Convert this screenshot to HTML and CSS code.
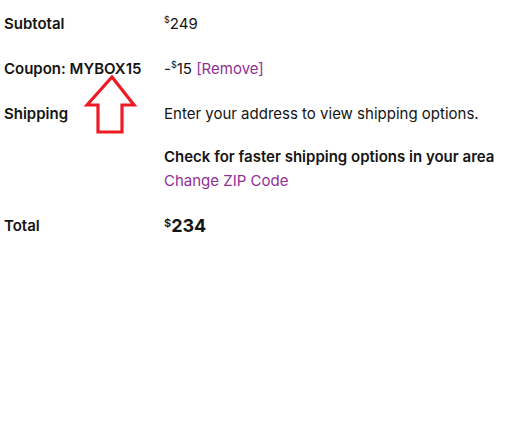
FILE: index.html
```html
<!DOCTYPE html>
<html lang="en">
<head>
    <meta charset="UTF-8">
    <meta name="viewport" content="width=device-width, initial-scale=1.0">
    <title>Order Summary</title>
    <link rel="stylesheet" href="styles.css">
</head>
<body>
    <div class="summary">
        <div class="label">Subtotal</div>
        <div class="value"><sup class="cur">$</sup>249</div>

        <div class="label coupon">
            Coupon: MYBOX15
            <!-- annotation arrow -->
            <svg class="arrow" width="54" height="62" viewBox="0 0 54 62">
                <polygon points="28,2 50,30 38,30 38,57 14,57 14,30 3,30" fill="none" stroke="#ed1c24" stroke-width="3.2" stroke-linejoin="miter"/>
            </svg>
        </div>
        <div class="value">-<sup class="cur">$</sup>15 <a href="#" class="link">[Remove]</a></div>

        <div class="label">Shipping</div>
        <div class="value">
            <p>Enter your address to view shipping options.</p>
            <div class="faster">
                <p class="strong">Check for faster shipping options in your area</p>
                <a href="#" class="link">Change ZIP Code</a>
            </div>
        </div>

        <div class="label">Total</div>
        <div class="value total"><sup class="cur">$</sup>234</div>
    </div>
</body>
</html>
```

FILE: styles.css
```css
* {
    margin: 0;
    padding: 0;
    box-sizing: border-box;
}

body {
    font-family: Inter, "Noto Sans", Arial, sans-serif;
    font-size: 15px;
    line-height: 24px;
    color: #141414;
    background: #fff;
}

.summary {
    display: grid;
    grid-template-columns: 160px 1fr;
    row-gap: 21px;
    padding: 12px 0 0 4px;
}

.label {
    font-weight: 600;
}

.coupon {
    position: relative;
}

.arrow {
    position: absolute;
    left: 80px;
    top: 18px;
}

.cur {
    font-size: 9px;
    vertical-align: top;
    line-height: 15px;
}

.link {
    color: #912f96;
    text-decoration: none;
}

.faster {
    margin-top: 19px;
}

.strong {
    font-weight: 600;
}

.total {
    font-size: 18px;
    font-weight: 700;
}

.total .cur {
    font-size: 11px;
    font-weight: 600;
    line-height: 18px;
}
```
